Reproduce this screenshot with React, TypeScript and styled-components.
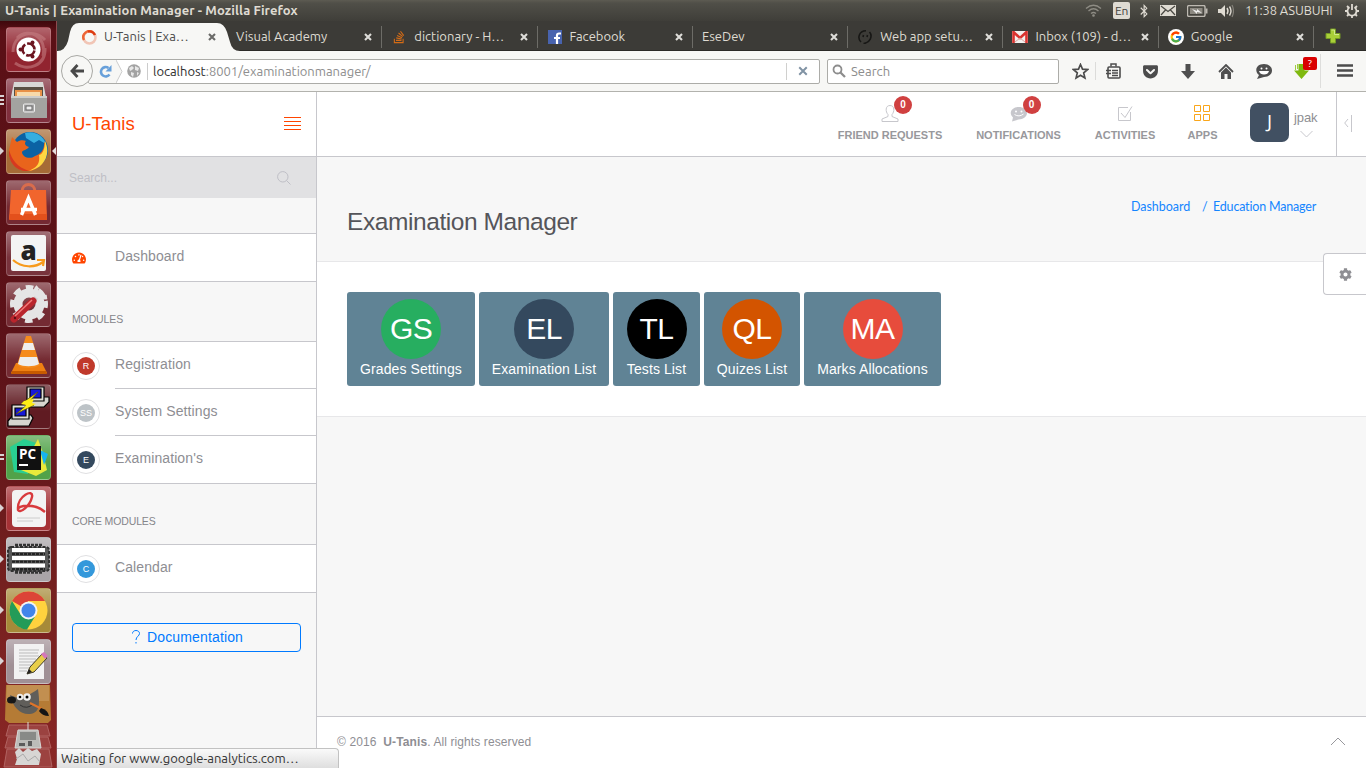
import React from "react";
import styled, { createGlobalStyle } from "styled-components";
import { FaBluetoothB, FaCog, FaGetPocket, FaStackOverflow, FaTachometerAlt } from "react-icons/fa";
import { FcGoogle } from "react-icons/fc";

const GlobalStyle = createGlobalStyle`
  * { box-sizing: border-box; }
  html, body { margin: 0; padding: 0; }
  body { width: 1366px; height: 768px; overflow: hidden; font-family: "Liberation Sans", Arial, sans-serif; }
  svg { display: block; flex: none; }
`;

const SYSTEM_FONT = `Ubuntu, "Open Sans", "Noto Sans", sans-serif`;

/* ---------- desktop ---------- */

const Desktop = styled.div`
  width: 1366px;
  height: 768px;
  display: grid;
  grid-template-rows: 21px 747px;
  overflow: hidden;
  background: #3c3b37;
`;

const MenuBar = styled.header`
  display: flex;
  align-items: center;
  padding: 0 7px 0 5px;
  background: linear-gradient(#5d5b52, #504f48 15%, #3f3e39);
  color: #dfdbd2;
  font: 12.9px/21px ${SYSTEM_FONT};
`;

const WindowTitle = styled.span`
  flex: 1;
  font-weight: 700;
  font-size: 13px;
  letter-spacing: 0.09px;
`;

const Indicators = styled.div`
  display: flex;
  align-items: center;
`;

const Indicator = styled.span<{ $w: number }>`
  width: ${(p) => p.$w}px;
  display: flex;
  justify-content: center;
`;

const LanguageBadge = styled.span`
  width: 17px;
  height: 17px;
  border-radius: 2px;
  background: #dfdbd2;
  color: #45443f;
  font-size: 12px;
  line-height: 17px;
  text-align: center;
  letter-spacing: -0.4px;
`;

const Clock = styled.span`
  width: 100px;
  letter-spacing: -0.08px;
  white-space: nowrap;
`;

const Workspace = styled.div`
  display: grid;
  grid-template-columns: 57px 1309px;
  min-height: 0;
`;

/* ---------- launcher ---------- */

const Launcher = styled.nav`
  display: flex;
  flex-direction: column;
  gap: 5px;
  padding-top: 5px;
  border-right: 1px solid #8d4a4e;
  background: linear-gradient(#3e080c, #5b1016 10px, #5c1218 45%, #74201f 75%, #8a2725);
  overflow: hidden;
`;

const LauncherRow = styled.div`
  display: flex;
  align-items: center;
  height: 46px;
  flex: none;
`;

const Marks = styled.div`
  width: 6px;
  height: 46px;
  display: flex;
  align-items: center;
  flex: none;
`;

const Tile = styled.div<{ $bg: string }>`
  width: 45px;
  height: 45px;
  border-radius: 4px;
  border: 1px solid rgba(255, 255, 255, 0.18);
  background: linear-gradient(rgba(255, 255, 255, 0.32), rgba(255, 255, 255, 0.03) 60%), ${(p) => p.$bg};
  display: grid;
  place-items: center;
`;

const FoldedStack = styled.div`
  margin-top: -5px;
  padding-left: 3px;
`;

/* ---------- browser ---------- */

const Browser = styled.div`
  display: grid;
  grid-template-rows: 30px 41px 676px;
  min-width: 0;
  position: relative;
`;

const TabStrip = styled.div`
  display: flex;
  padding-left: 15px;
  background: #3c3b37;
  border-bottom: 1px solid #2b2a27;
  font: 13px/30px ${SYSTEM_FONT};
`;

const TabItem = styled.div<{ $active?: boolean; $plain?: boolean; $divided?: boolean }>`
  position: relative;
  width: ${(p) => (p.$divided ? 155.3 : 155)}px;
  height: 30px;
  display: flex;
  align-items: center;
  gap: 7px;
  padding: 0 ${(p) => (p.$active ? 11 : 10)}px 0 9px;
  color: ${(p) => (p.$active ? "#4c4c4c" : "#dfdbd2")};
  background: ${(p) => (p.$divided ? "linear-gradient(#6d6c67, #6d6c67) right 0 top 5px / 1px 22px no-repeat" : "none")};
`;

const TabShape = styled.svg`
  position: absolute;
  left: -15px;
  top: 2px;
`;

const TabLabel = styled.span`
  position: relative;
  flex: 1;
  white-space: nowrap;
`;

const TabIcon = styled.span`
  position: relative;
  width: 16px;
  margin-top: 2px;
  display: flex;
  justify-content: center;
`;

const TabClose = styled.span`
  position: relative;
  margin-top: 2px;
`;

const NewTab = styled.div`
  display: flex;
  align-items: center;
  padding: 1px 0 0 11px;
`;

const Toolbar = styled.div`
  display: flex;
  align-items: center;
  padding-left: 4px;
  background: #f7f7f5;
  border-bottom: 1px solid #b2b2ad;
  font: 13px/23px ${SYSTEM_FONT};
`;

const BackButton = styled.div`
  width: 32px;
  height: 32px;
  border-radius: 50%;
  border: 1px solid #a9a9a5;
  background: #f7f7f5;
  display: grid;
  place-items: center;
  z-index: 1;
`;

const UrlBar = styled.div`
  width: 732px;
  height: 25px;
  margin-left: -5px;
  display: flex;
  align-items: center;
  border: 1px solid #acaca8;
  border-radius: 2px;
  background: #fff;
`;

const IdentityBox = styled.div`
  width: 58px;
  height: 23px;
  display: flex;
  align-items: center;
  padding-left: 10px;
  gap: 4px;
  background: linear-gradient(90deg, #f7f7f5 27px, #fff 27px);
`;

const UrlText = styled.span`
  flex: 1;
  color: #8e8e8e;
  letter-spacing: -0.02px;
  b { font-weight: 400; color: #2e2e2e; }
`;

const StopBox = styled.div`
  width: 33px;
  height: 17px;
  border-left: 1px solid #d0d0ce;
  display: grid;
  place-items: center;
`;

const SearchBar = styled.div`
  width: 232px;
  height: 25px;
  margin: 0 9px 0 7px;
  padding-left: 4px;
  display: flex;
  align-items: center;
  gap: 5px;
  border: 1px solid #acaca8;
  border-radius: 2px;
  background: #fff;
  color: #8c8c8c;
`;

const ToolButton = styled.div<{ $w?: number; $line?: boolean }>`
  position: relative;
  width: ${(p) => p.$w ?? 38}px;
  height: ${(p) => (p.$line ? 34 : 18)}px;
  display: grid;
  place-items: center;
  border-right: ${(p) => (p.$line ? "1px solid #dededc" : "none")};
`;

const StarButton = styled(ToolButton)`
  padding-right: 3px;
  border-right: 1px solid #dcdcda;
`;

const AlertBadge = styled.span`
  position: absolute;
  right: 3px;
  top: 3px;
  width: 14px;
  height: 13px;
  border-radius: 2px;
  background: #d90000;
  color: #fff;
  font-size: 10px;
  line-height: 13px;
  text-align: center;
`;

const StatusBubble = styled.div`
  position: absolute;
  left: 0;
  bottom: 0;
  width: 282px;
  height: 20px;
  padding-left: 4px;
  border: 1px solid #c2c2c2;
  border-left: 0;
  border-bottom: 0;
  border-top-right-radius: 4px;
  background: linear-gradient(#fafafa, #dedede);
  color: #333;
  font: 13px/18px ${SYSTEM_FONT};
  white-space: nowrap;
`;

/* ---------- web application ---------- */

const WebApp = styled.div`
  display: grid;
  grid-template-columns: 260px 1049px;
  min-height: 0;
  background: #f7f7f7;
  color: #8e8e93;
`;

const Sidebar = styled.aside`
  border-right: 1px solid #c7c7cc;
`;

const Brand = styled.div`
  height: 65px;
  display: flex;
  align-items: center;
  justify-content: space-between;
  padding: 0 15px;
  background: #fff;
  border-bottom: 1px solid #c7c7cc;
  color: #ff4500;
  font-size: 18.5px;
`;

const SideSearch = styled.div`
  height: 41px;
  display: flex;
  align-items: center;
  justify-content: space-between;
  padding: 0 25px 0 12px;
  background: #e1e1e3;
  color: #bfbfc6;
  font-size: 12px;
`;

const SectionTitle = styled.div<{ $h: number }>`
  height: ${(p) => p.$h}px;
  display: flex;
  align-items: flex-end;
  padding: 0 15px ${(p) => p.$h - 43}px;
  font-size: 10.5px;
  line-height: 12px;
  letter-spacing: -0.13px;
  color: #85858a;
`;

const SidebarGap = styled.div`
  height: 35px;
`;

const NavGroup = styled.div`
  background: #fff;
  border: solid #c7c7cc;
  border-width: 1px 0;
`;

const NavItem = styled.div`
  display: flex;
  align-items: center;
  height: 47px;
`;

const NavIcon = styled.span`
  width: 58px;
  padding-left: 15px;
`;

const NavLabel = styled.span<{ $divided?: boolean }>`
  flex: 1;
  height: 47px;
  line-height: 45px;
  font-size: 14px;
  letter-spacing: 0.1px;
  border-bottom: ${(p) => (p.$divided ? "1px solid #c7c7cc" : "0")};
`;

const Ring = styled.span`
  width: 28px;
  height: 28px;
  border: 1px solid #e0e0e2;
  border-radius: 50%;
  background: #fff;
  display: grid;
  place-items: center;
`;

const Monogram = styled.span<{ $color: string; $size: number; $font: number }>`
  width: ${(p) => p.$size}px;
  height: ${(p) => p.$size}px;
  border-radius: 50%;
  background: ${(p) => p.$color};
  color: #fff;
  font-size: ${(p) => p.$font}px;
  line-height: ${(p) => p.$size}px;
  text-align: center;
`;

const DocsButton = styled.div`
  height: 29px;
  margin: 30px 15px 0;
  padding: 0 0 2px 2px;
  display: flex;
  align-items: center;
  justify-content: center;
  gap: 7px;
  border: 1px solid #007aff;
  border-radius: 4px;
  color: #007aff;
  font-size: 14px;
  letter-spacing: 0.15px;
`;

const Main = styled.main`
  display: grid;
  grid-template-rows: 65px 105px 155px 299px 52px;
  position: relative;
`;

const TopBar = styled.div`
  display: flex;
  justify-content: flex-end;
  background: #fff;
  border-bottom: 1px solid #c7c7cc;
`;

const TopLink = styled.div<{ $w: number }>`
  position: relative;
  width: ${(p) => p.$w}px;
  margin-right: 33px;
  padding-top: 12px;
  display: flex;
  flex-direction: column;
  align-items: center;
  gap: 6px;
  font-size: 11px;
  font-weight: 700;
  line-height: 13px;
  color: #98989c;
  white-space: nowrap;
`;

const CountBadge = styled.span`
  position: absolute;
  left: calc(50% + 4px);
  top: 4px;
  width: 18px;
  height: 18px;
  border-radius: 9px;
  background: #d04040;
  color: #fff;
  font-size: 10px;
  line-height: 17px;
  text-align: center;
`;

const Avatar = styled.div`
  width: 39px;
  height: 39px;
  margin-top: 11px;
  border-radius: 7px;
  background: #415062;
  color: #fff;
  font: 19px/37px "Open Sans", sans-serif;
  text-align: center;
`;

const UserName = styled.div`
  width: 47px;
  padding: 17px 0 0 5px;
  font-size: 13px;
  line-height: 17px;
  letter-spacing: -0.1px;
  svg { margin: 4px 0 0 6px; }
`;

const Collapse = styled.div`
  width: 30px;
  padding: 22px 0 0 7px;
  border-left: 1px solid #c7c7cc;
`;

const PageHeading = styled.div`
  display: flex;
  justify-content: space-between;
  padding: 0 50px 0 30px;
  border-bottom: 1px solid #e7e7e9;
`;

const Heading = styled.h1`
  margin: 50px 0 0;
  font-size: 24.5px;
  line-height: 30px;
  font-weight: 400;
  letter-spacing: -0.42px;
  color: #55555a;
`;

const Breadcrumb = styled.div`
  display: flex;
  padding-top: 40px;
  color: #1485ff;
  font: 12.5px/19px Lato, sans-serif;
  white-space: nowrap;
`;

const Crumb = styled.span<{ $w: number; $spacing?: number }>`
  width: ${(p) => p.$w}px;
  letter-spacing: ${(p) => p.$spacing ?? 0}px;
`;

const CardPanel = styled.section`
  display: flex;
  gap: 4px;
  padding: 30px;
  background: #fff;
  border-bottom: 1px solid #e7e7e9;
`;

const Card = styled.div<{ $w: number }>`
  width: ${(p) => p.$w}px;
  height: 94px;
  padding-top: 7px;
  display: flex;
  flex-direction: column;
  align-items: center;
  border-radius: 3px;
  background: #608395;
  color: #fff;
  font-size: 14px;
  line-height: 21px;
  letter-spacing: 0.1px;
  white-space: nowrap;
`;

const CardMonogram = styled(Monogram)`
  letter-spacing: -0.6px;
`;

const SettingsTab = styled.div`
  position: absolute;
  right: 0;
  top: 161px;
  width: 43px;
  height: 42px;
  display: grid;
  place-items: center;
  border: 1px solid #c7c7cc;
  border-right: 0;
  border-radius: 4px 0 0 4px;
  background: #fff;
`;

const Footer = styled.footer`
  grid-row: 5;
  display: flex;
  align-items: center;
  justify-content: space-between;
  padding: 0 20px 2px;
  background: #fff;
  border-top: 1px solid #c7c7cc;
  font-size: 12px;
  letter-spacing: 0.1px;
`;

/* ---------- launcher drawings ---------- */

const Icon46 = ({ children }: { children: React.ReactNode }) => (
  <svg width="44" height="44" viewBox="0 0 44 44">{children}</svg>
);

const launcherItems: { bg: string; mark?: "dot" | "three" | "two" | "active"; art: React.ReactNode }[] = [
  {
    bg: "#8d1d28",
    art: (
      <Icon46>
        <path d="M6 24C6 5 28 0 38 12M38 20C39 38 20 44 8 35M10 10C22-1 40 8 36 28" fill="none" stroke="#c98386" strokeWidth="3" opacity=".55" />
        <circle cx="21.500" cy="21.500" r="12" fill="#fff" />
        <circle cx="21.500" cy="21.500" r="6" fill="none" stroke="#6c1520" strokeWidth="2.600" strokeDasharray="10.560 2" strokeDashoffset="-1" />
        <g fill="#6c1520"><circle cx="13.500" cy="21.500" r="2" /><circle cx="25.500" cy="14.500" r="2" /><circle cx="25.500" cy="28.500" r="2" /></g>
      </Icon46>
    ),
  },
  {
    bg: "#7c2837",
    mark: "three",
    art: (
      <Icon46>
        <path d="M7 3h29l3 15v20H4V18z" fill="#d7d7d5" />
        <path d="M7 8h29v10H7z" fill="#584f43" />
        <path d="M8 11h27v7H8z" fill="#e99147" /><path d="M10 13h23v4H10z" fill="#f8d9a9" />
        <path d="M4 17h36v22H4z" fill="#a3a3a0" /><path d="M4 17h36v2H4z" fill="#cecdca" />
        <rect x="16.500" y="25" width="11" height="8" rx="1" fill="#aaa" stroke="#eee" />
        <rect x="19" y="27" width="6" height="4" fill="#eee" stroke="#666" />
      </Icon46>
    ),
  },
  {
    bg: "#a3662f",
    mark: "active",
    art: (
      <Icon46>
        <circle cx="23" cy="20" r="18" fill="#0b62a4" />
        <path d="M18 3c9-3 19 3 21 11l-7-4-5 3-8-5z" fill="#35aee0" />
        <path d="M37 11c6 14-2 29-15 30C10 42 1 32 2 20L5 7l5 5c3-2 6-2 9-1-2 2-1 5 3 6-2 3-6 3-7 5 0 5 8 8 13 4 5-2 10-5 9-15z" fill="#e9641c" />
        <path d="M38 11c7 15-3 28-16 30 9-4 11-8 10-16 4-1 6-7 6-14z" fill="#ffd742" />
        <path d="M2 20c3 10 8 17 20 21C9 42 1 32 2 20z" fill="#d63920" />
      </Icon46>
    ),
  },
  {
    bg: "#70222b",
    art: (
      <Icon46>
        <path d="M15 11c0-10 13-10 13 0" fill="none" stroke="#d96c4c" strokeWidth="3" />
        <path d="M4 9h35l1 29H2z" fill="#f1652d" /><path d="M3 33h37v6H2z" fill="#e3501c" />
        <path d="M14.500 34l7-17 7 17M14 28.500h16" fill="none" stroke="#fff" strokeWidth="3.400" />
      </Icon46>
    ),
  },
  {
    bg: "#742c36",
    art: (
      <Icon46>
        <rect x="4" y="3" width="35" height="36" rx="2" fill="#f4f4f4" />
        <text x="21.500" y="28" textAnchor="middle" fontFamily="Open Sans, sans-serif" fontWeight="800" fontSize="26" fill="#222">a</text>
        <path d="M6 28c9 8 22 8 30 2M30 28l7 0-1 6" fill="none" stroke="#f79a1c" strokeWidth="2.200" />
      </Icon46>
    ),
  },
  {
    bg: "#70242c",
    art: (
      <Icon46>
        <circle cx="22" cy="21" r="11" fill="none" stroke="#e5e5e5" strokeWidth="9" />
        <circle cx="22" cy="21" r="16.500" fill="none" stroke="#e5e5e5" strokeWidth="5" strokeDasharray="7.500 5.460" strokeDashoffset="3.700" />
        <path d="M26 18l7-7" stroke="#cfcfcf" strokeWidth="4.500" />
        <path d="M31 4c-5 4-3 12 9 10M33 13l-4-5" fill="none" stroke="#e4e4e4" strokeWidth="4.500" />
        <path d="M7 36L26 18" stroke="#b9252c" strokeWidth="7" strokeLinecap="round" /><path d="M8 33L25 17" stroke="#ef7b79" strokeWidth="1.500" />
        <circle cx="8" cy="35" r="1.200" fill="#5a1015" />
      </Icon46>
    ),
  },
  {
    bg: "#70242c",
    art: (
      <Icon46>
        <path d="M9 29h26l5 10H4z" fill="#ef8012" /><path d="M5 37h34l1 3H4z" fill="#c75a00" />
        <path d="M19 2h5l9 29c-5 4-18 4-23 0z" fill="#f58b1c" />
        <path d="M17 9h9l2 7H15zM13 23h17l2 7c-5 3-16 3-21 0z" fill="#eee" />
      </Icon46>
    ),
  },
  {
    bg: "#5b141b",
    art: (
      <Icon46>
        <g stroke="#000" strokeWidth="1.200">
          <path d="M18 17l4-5h20v5l-5 5H18z" fill="#d6d6cf" /><path d="M20 2h17v14H20z" fill="#deded6" /><path d="M23 4h11v9H23z" fill="#1518d8" />
          <path d="M1 36l5-6h18l2 3-4 8H1z" fill="#d6d6cf" /><path d="M5 20h17v14H5z" fill="#deded6" /><path d="M8 23h11v8H8z" fill="#1518d8" />
        </g>
        <path d="M31 7L15 18l6 1-12 10 18-9-6-2z" fill="#ffed18" stroke="#554c00" strokeWidth=".7" />
        <path d="M17 16l10-2-2 4 4 1-12 5 2-4-5-1z" fill="#ffed18" />
      </Icon46>
    ),
  },
  {
    bg: "#4b9f43",
    mark: "two",
    art: (
      <Icon46>
        <path d="M3 11L17 3l12 4-8 31-14-2z" fill="#29cf91" /><path d="M31 3l5 14 4 17-11 6-15-6z" fill="#e8ea3b" /><path d="M33 14l8 4-4 11z" fill="#16b4ee" />
        <path d="M10 10h24v24H10z" fill="#111" />
        <text x="12" y="22.500" fontFamily="Open Sans, sans-serif" fontWeight="700" fontSize="13.500" fill="#fff">PC</text><path d="M12 28h9v2h-9z" fill="#fff" />
      </Icon46>
    ),
  },
  {
    bg: "#a22b30",
    mark: "dot",
    art: (
      <Icon46>
        <rect x="5" y="3" width="34" height="37" rx="4" fill="#f3f3f3" />
        <path d="M11 22C10 9 27 1 25 10 23 19 13 27 11 23c-1-5 17-7 27 2" fill="none" stroke="#d83a3d" strokeWidth="2.400" />
        <path d="M10 31h23M10 34h16" stroke="#ccc" />
      </Icon46>
    ),
  },
  {
    bg: "#a6a1a4",
    mark: "dot",
    art: (
      <Icon46>
        <rect x="1" y="9" width="41" height="24" rx="3" fill="#5a5a5a" stroke="#303030" strokeWidth="2" strokeDasharray="3 1.500" />
        <path d="M8 7h27M8 34.500h27" stroke="#333" strokeWidth="2.500" strokeDasharray="3 1" />
        <path d="M5 12h33M5 20h33M5 27.500h33" stroke="#fff" strokeWidth="4" />
        <path d="M5 16h33M5 23.700h33M5 31h33" stroke="#222" strokeWidth="2" strokeDasharray="3 1" />
      </Icon46>
    ),
  },
  {
    bg: "#a38633",
    mark: "dot",
    art: (
      <Icon46>
        <circle cx="21.500" cy="21.500" r="19" fill="#ffd23e" />
        <path d="M21.500 21.500L5 12A19 19 0 0 1 38 12H21z" fill="#dc4437" />
        <path d="M5 12a19 19 0 0 0 15 28.500l8-13L14 26z" fill="#249b58" />
        <circle cx="21.500" cy="21.500" r="9" fill="#f4f4f4" /><circle cx="21.500" cy="21.500" r="7" fill="#4285ea" />
      </Icon46>
    ),
  },
  {
    bg: "#9d8c92",
    mark: "dot",
    art: (
      <Icon46>
        <path d="M7 4h30v35H7z" fill="#f2f2f2" />
        <path d="M12 10h20M12 13h19M12 16h20M12 19h17M12 22h18M12 25h12M12 28h10M12 31h8" stroke="#bbb" />
        <path d="M20 34l3-7 12-13 5 4-13 14z" fill="#e8ce48" stroke="#403c2a" /><path d="M20 34l2-5 3 3z" fill="#222" /><path d="M34 14l3-2 4 4-3 3z" fill="#d477ba" />
      </Icon46>
    ),
  },
];

const RunningMark = ({ kind }: { kind?: string }) => (
  <Marks>
    {kind && (
      <svg width="5" height="12" viewBox="0 0 5 12" fill="#d9d3d4">
        {kind === "three" || kind === "two" ? (
          <path d={kind === "three" ? "M0 1h4v2H0zM0 5h4v2H0zM0 9h4v2H0z" : "M0 3h4v2H0zM0 7h4v2H0z"} />
        ) : (
          <path d="M0 2l4 4-4 4z" />
        )}
      </svg>
    )}
  </Marks>
);

const ActiveMark = styled.span`
  width: 0;
  height: 0;
  border: solid transparent;
  border-width: 4px 4px 4px 0;
  border-right-color: #e5dede;
  margin-left: 1px;
`;

const FoldedIcons = () => (
  <svg width="50" height="84" viewBox="0 0 50 84">
    <path d="M3 1h44l1 35-3 3H6l-4-3z" fill="#b57b35" /><path d="M4 1h42v16H3z" fill="#d9b583" opacity=".35" />
    <path d="M7 11c9 5 17 2 28-6 2 15 2 24-8 25-9 1-17-6-20-19z" fill="#605e5a" />
    <ellipse cx="8.500" cy="16" rx="4.500" ry="3.500" fill="#171717" />
    <circle cx="17" cy="13" r="3.200" fill="#eee" /><circle cx="24" cy="13" r="3.800" fill="#eee" /><circle cx="17" cy="13" r="1.300" /><circle cx="24" cy="13" r="1.500" />
    <path d="M17 21q7 5 13-1" fill="none" stroke="#333" /><path d="M27 19l12 6" stroke="#e07428" strokeWidth="2" /><path d="M38 24q7 2 8 8-7 0-10-5z" fill="#151515" />
    <path d="M6 41h38l3 11H3zM5 53h40l3 11H2zM4 65h42l3 18H1z" fill="#a34c4a" stroke="#bf7775" opacity=".75" />
    <path d="M25 38v8M15 46h20l3 18H12z" fill="#bcbcb9" stroke="#d8d8d6" /><path d="M17 48h16v8H17z" fill="#888a87" />
    <path d="M16 59h6v3h-6zM25 57h4v5h-4z" fill="#5b5b5b" /><path d="M12 68l4-4 4 4 5-4 4 3 5-2 4 5-2 11H12l2-6z" fill="#d8d6d4" />
    <path d="M13 75l7-5 5 7 7-5 5 6" fill="none" stroke="#aaa" />
  </svg>
);

/* ---------- small shared drawings ---------- */

const Cross = ({ color, size = 8 }: { color: string; size?: number }) => (
  <svg width={size} height={size} viewBox="0 0 8 8"><path d="M1 1l6 6M7 1L1 7" stroke={color} strokeWidth={size > 8 ? 1.6 : 2.1} /></svg>
);

const Magnifier = () => (
  <svg width="14" height="14" viewBox="0 0 14 14" fill="none" stroke="#8d8d8d"><circle cx="5.500" cy="5.500" r="4" strokeWidth="1.800" /><path d="M8.500 8.500l4.500 4.500" strokeWidth="2.300" /></svg>
);

const tabs: { label: string; icon?: React.ReactNode }[] = [
  { label: "Visual Academy" },
  {
    label: "dictionary - H…",
    icon: <FaStackOverflow size={14} color="#d36b16" />,
  },
  {
    label: "Facebook",
    icon: <svg width="14" height="14" viewBox="0 0 14 14"><path d="M0 0h14v14H0z" fill="#4863ae" /><path d="M9 14V5.500Q9 3.500 11 3.500h2M6 8h6" fill="none" stroke="#fff" strokeWidth="2.200" /></svg>,
  },
  { label: "EseDev" },
  {
    label: "Web app setu…",
    icon: <svg width="14" height="14" viewBox="0 0 14 14" fill="none" stroke="#171715" strokeWidth="1.600"><path d="M8 .8C1 1-1 8 3 12M5.500 13.500C12 13 15 6 11.500 2M5.500 5l-.5 2M9.500 5L9 7" /></svg>,
  },
  {
    label: "Inbox (109) - d…",
    icon: <svg width="16" height="12" viewBox="0 0 16 12"><path d="M0 0h16v12H0z" fill="#f3f1ef" /><path d="M1.500 12V1L8 7l6.500-6v11" fill="none" stroke="#d93430" strokeWidth="2.600" /><path d="M3 11l5-4 5 4" stroke="#d9a29f" fill="none" /></svg>,
  },
  {
    label: "Google",
    icon: <svg width="16" height="16" viewBox="0 0 16 16"><circle cx="8" cy="8" r="8" fill="#fff" /><g transform="translate(1.500 1.500)"><FcGoogle size={13} /></g></svg>,
  },
];

const modules = [
  { letter: "R", label: "Registration", color: "#c0392b" },
  { letter: "SS", label: "System Settings", color: "#bdc3c7" },
  { letter: "E", label: "Examination's", color: "#34495e" },
];

const cards = [
  { code: "GS", label: "Grades Settings", color: "#27ae60", width: 128 },
  { code: "EL", label: "Examination List", color: "#34495e", width: 130 },
  { code: "TL", label: "Tests List", color: "#000", width: 87 },
  { code: "QL", label: "Quizes List", color: "#d35400", width: 96 },
  { code: "MA", label: "Marks Allocations", color: "#e74c3c", width: 137 },
];

const SystemMenu = () => (
  <MenuBar>
    <WindowTitle>U-Tanis | Examination Manager - Mozilla Firefox</WindowTitle>
    <Indicators>
      <Indicator $w={40}>
        <svg width="17" height="13" viewBox="0 0 17 13" fill="none" stroke="#8e8c84" strokeWidth="1.300"><path d="M1 4.500Q8.500-2 16 4.500M3.500 7Q8.500 2.500 13.500 7M6 9.500q2.500-2 5 0" /><circle cx="8.500" cy="11.500" r=".7" /></svg>
      </Indicator>
      <LanguageBadge>En</LanguageBadge>
      <Indicator $w={28}><FaBluetoothB size={14} /></Indicator>
      <Indicator $w={19}>
        <svg width="16" height="11" viewBox="0 0 16 11"><path d="M0 0h16v11H0z" fill="#dfdbd2" /><path d="M1 1l7 5.500L15 1M1 10l4.500-5M15 10l-4.500-5" fill="none" stroke="#4a4943" strokeWidth="1.200" /></svg>
      </Indicator>
      <Indicator $w={41}>
        <svg width="21" height="12" viewBox="0 0 21 12" fill="none" stroke="#bdb9b1"><rect x=".5" y=".5" width="17.500" height="11" rx="1.500" strokeWidth="1.400" /><path d="M3 3h12.500v6H3z" fill="#8c8981" stroke="none" /><path d="M19.500 3.500v5" strokeWidth="2" /><path d="M5 4l5 2v-2l5 4-5-1v2z" fill="#eee" stroke="none" /></svg>
      </Indicator>
      <Indicator $w={16}>
        <svg width="16" height="14" viewBox="0 0 16 14"><path d="M0 5h3l4-4v12L3 9H0z" fill="#dfdbd2" /><path d="M9 4q2 3 0 6M11.500 2.500q3 4.500 0 9" fill="none" stroke="#dfdbd2" strokeWidth="1.400" /><path d="M14 1q3 6 0 12" fill="none" stroke="#85827a" strokeWidth="1.200" /></svg>
      </Indicator>
      <Indicator $w={11} />
      <Clock>11:38 ASUBUHI</Clock>
      <svg width="14" height="14" viewBox="0 0 14 14" fill="none" stroke="#dfdbd2"><path d="M4.500 3.300a4.500 4.500 0 1 0 5 0" strokeWidth="1.800" /><path d="M7 0v6" strokeWidth="1.800" /><path d="M7 14v-3M0 7h3M11 7h3M2 2l2 2M12 2l-2 2M2 12l2-2M12 12l-2-2" strokeWidth="1.800" /></svg>
    </Indicators>
  </MenuBar>
);

const AppLauncher = () => (
  <Launcher>
    {launcherItems.map((item, i) => (
      <LauncherRow key={i}>
        <RunningMark kind={item.mark} />
        <Tile $bg={item.bg}>{item.art}</Tile>
        {item.mark === "active" && <ActiveMark />}
      </LauncherRow>
    ))}
    <FoldedStack><FoldedIcons /></FoldedStack>
  </Launcher>
);

const BrowserTabs = () => (
  <TabStrip>
    <TabItem $active>
      <TabShape width="183" height="28" viewBox="0 0 183 28"><path d="M0 28Q8 28 11 18L13 9Q15 0 22 0H160Q167 0 170 9l3 10Q175 28 183 28z" fill="#f7f7f5" /></TabShape>
      <TabIcon>
        <svg width="15" height="15" viewBox="0 0 15 15" fill="none"><circle cx="7.500" cy="7.500" r="6" stroke="#f1c5b5" strokeWidth="2.500" /><path d="M11 2.500A6 6 0 0 0 2 10" stroke="#ed6536" strokeWidth="2.500" /><path d="M6 1.600a6 6 0 0 1 7 3.500" stroke="#dd3c12" strokeWidth="2.500" /></svg>
      </TabIcon>
      <TabLabel>U-Tanis | Exa…</TabLabel>
      <TabClose><Cross color="#6a6a68" /></TabClose>
    </TabItem>
    {tabs.map((tab) => (
      <TabItem key={tab.label} $plain={!tab.icon} $divided>
        {tab.icon && <TabIcon>{tab.icon}</TabIcon>}
        <TabLabel>{tab.label}</TabLabel>
        <TabClose><Cross color="#deddd9" /></TabClose>
      </TabItem>
    ))}
    <NewTab>
      <svg width="16" height="16" viewBox="0 0 16 16"><path d="M5.500 1h5v4.500H15v5h-4.500V15h-5v-4.500H1v-5h4.500z" fill="#a9cf38" stroke="#749a24" /><path d="M6.500 2h3v4.500H14" fill="none" stroke="#d2e98c" /></svg>
    </NewTab>
  </TabStrip>
);

const BrowserToolbar = () => (
  <Toolbar>
    <BackButton>
      <svg width="14" height="14" viewBox="0 0 14 14" fill="none" stroke="#484848" strokeWidth="2.800"><path d="M7.500 1L2 7l5.500 6M2 7h12" /></svg>
    </BackButton>
    <UrlBar>
      <IdentityBox>
        <svg width="13" height="13" viewBox="0 0 13 13"><path d="M10.500 9.500A4.700 4.700 0 1 1 9.500 3" fill="none" stroke="#68a0da" strokeWidth="2.600" /><path d="M12.500 0v6.500H6.500z" fill="#68a0da" /></svg>
        <svg width="7" height="23" viewBox="0 0 7 23"><path d="M0 0l6 11.500L0 23" fill="#f7f7f5" stroke="#ccc" /></svg>
        <svg width="14" height="14" viewBox="0 0 14 14"><circle cx="7" cy="7" r="6.800" fill="#a3a3a3" /><path d="M2 4l3-2 2 2-2 2-2 1zM8 2l4 2-1 3-3-1zM4 8l3 1-1 4-2-2zM10 8l2 1-2 3z" fill="#e8e8e8" /></svg>
      </IdentityBox>
      <svg width="6" height="17" viewBox="0 0 6 17"><path d="M.5 0v17" stroke="#ccc" /></svg>
      <UrlText><b>localhost</b>:8001/examinationmanager/</UrlText>
      <StopBox><Cross color="#8093a4" size={10} /></StopBox>
    </UrlBar>
    <SearchBar><Magnifier />Search</SearchBar>
    <StarButton $w={28}>
      <svg width="17" height="17" viewBox="0 0 17 17"><path d="M8.500 1.500l2 4.700 5 .4-3.800 3.300 1.200 5-4.400-2.700-4.400 2.700 1.200-5L1.500 6.600l5-.4z" fill="none" stroke="#4c4c4c" strokeWidth="1.700" /></svg>
    </StarButton>
    <ToolButton $w={35}>
      <svg width="15" height="16" viewBox="0 0 15 16" fill="none" stroke="#4c4c4c"><path d="M5 3.500V1h5v2.500" strokeWidth="1.500" /><rect x="2" y="4" width="12" height="11" rx="1" strokeWidth="1.600" /><path d="M0 7.500h5M0 10.500h5M6 7.500h6M6 10h6M6 12.500h6" strokeWidth="1.300" /></svg>
    </ToolButton>
    <ToolButton><FaGetPocket size={17} color="#4c4c4c" /></ToolButton>
    <ToolButton>
      <svg width="14" height="15" viewBox="0 0 14 15"><path d="M4.500 0h5v7H14l-7 8-7-8h4.500z" fill="#4f4f4f" /></svg>
    </ToolButton>
    <ToolButton>
      <svg width="16" height="15" viewBox="0 0 16 15"><path d="M1 8l7-7 7 7" fill="none" stroke="#4f4f4f" strokeWidth="1.800" /><path d="M3 8.500l5-5 5 5V15H9.500v-5h-3v5H3z" fill="#4f4f4f" /></svg>
    </ToolButton>
    <ToolButton>
      <svg width="16" height="15" viewBox="0 0 16 15"><path d="M8 0c5 0 8 3 8 6.500S13 13 8 13l-7 2 2-4C-2 7 0 0 8 0z" fill="#4f4f4f" /><circle cx="5.500" cy="4.500" r="1" fill="#fff" /><circle cx="10.500" cy="4.500" r="1" fill="#fff" /><path d="M3 7h10Q12 10.500 8 10.500T3 7z" fill="#fff" /></svg>
    </ToolButton>
    <ToolButton $line>
      <svg width="15" height="16" viewBox="0 0 15 16"><path d="M4.500 1h6v6.500H15L7.500 16 0 7.500h4.500z" fill="#7fb90f" /><path d="M1.500 2v5M3.500 1v5" stroke="#a1cd42" /></svg>
      <AlertBadge>?</AlertBadge>
    </ToolButton>
    <ToolButton $w={48}>
      <svg width="16" height="14" viewBox="0 0 16 14"><path d="M0 1.500h16M0 6.500h16M0 11.500h16" stroke="#4c4c4c" strokeWidth="2.700" /></svg>
    </ToolButton>
  </Toolbar>
);

const NavMonogram = ({ letter, color }: { letter: string; color: string }) => (
  <NavIcon><Ring><Monogram $color={color} $size={18} $font={9}>{letter}</Monogram></Ring></NavIcon>
);

const SideNavigation = () => (
  <Sidebar>
    <Brand>
      U-Tanis
      <svg width="17" height="14" viewBox="0 0 17 14"><path d="M0 .5h17M0 4.500h17M0 8.500h17M0 12.500h17" stroke="#ff4500" /></svg>
    </Brand>
    <SideSearch>
      Search...
      <svg width="14" height="14" viewBox="0 0 14 14" fill="none" stroke="#bfbfc6"><circle cx="5.800" cy="5.800" r="5.200" /><path d="M9.500 9.500l4 4" /></svg>
    </SideSearch>
    <SidebarGap />
    <NavGroup>
      <NavItem>
        <NavIcon><FaTachometerAlt size={14} color="#ff4500" /></NavIcon>
        <NavLabel>Dashboard</NavLabel>
      </NavItem>
    </NavGroup>
    <SectionTitle $h={59}>MODULES</SectionTitle>
    <NavGroup>
      {modules.map((m, i) => (
        <NavItem key={m.label}>
          <NavMonogram letter={m.letter} color={m.color} />
          <NavLabel $divided={i < modules.length - 1}>{m.label}</NavLabel>
        </NavItem>
      ))}
    </NavGroup>
    <SectionTitle $h={60}>CORE MODULES</SectionTitle>
    <NavGroup>
      <NavItem>
        <NavMonogram letter="C" color="#3498db" />
        <NavLabel>Calendar</NavLabel>
      </NavItem>
    </NavGroup>
    <DocsButton>
      <svg width="8" height="14" viewBox="0 0 8 14" fill="none" stroke="#007aff"><path d="M.5 3.500C.5-.5 7.500-.5 7.500 3.500 7.500 6 4 6.500 4 10M4 12v1.500" /></svg>
      Documentation
    </DocsButton>
  </Sidebar>
);

const Content = () => (
  <Main>
    <TopBar>
      <TopLink $w={104}>
        <svg width="18" height="19" viewBox="0 0 18 19" fill="none" stroke="#c7c7cc"><path d="M7 10.500C4.500 8 4 1.500 9 1.500s4.500 6.500 2 9v2l6 2.500v2.500H1V15l6-2.500z" /></svg>
        FRIEND REQUESTS
        <CountBadge>0</CountBadge>
      </TopLink>
      <TopLink $w={87}>
        <svg width="18" height="19" viewBox="0 0 18 19"><path d="M8.500 3c5 0 8.500 2.500 8.500 6s-3.500 6.500-8.500 6.500L2 17.500l1-4C-2 9 2 3 8.500 3z" fill="#c7c7cc" /><circle cx="6" cy="7.500" r="1" fill="#fff" /><circle cx="11.500" cy="7.500" r="1" fill="#fff" /><path d="M4.500 10.500q4.500 3 9-.5" fill="none" stroke="#fff" /></svg>
        NOTIFICATIONS
        <CountBadge>0</CountBadge>
      </TopLink>
      <TopLink $w={60}>
        <svg width="16" height="19" viewBox="0 0 16 19" fill="none" stroke="#c7c7cc"><path d="M11 3.500H1.500v13h12V8M4 9l4 4.500 7-11" /></svg>
        ACTIVITIES
      </TopLink>
      <TopLink $w={29}>
        <svg width="17" height="19" viewBox="0 0 17 19" fill="none" stroke="#faa61a"><path d="M.5 1.500h6v6h-6zM9.500 1.500h6v6h-6zM.5 10.500h6v6h-6zM9.500 10.500h6v6h-6z" /></svg>
        APPS
      </TopLink>
      <Avatar>J</Avatar>
      <UserName>
        jpak
        <svg width="13" height="8" viewBox="0 0 13 8"><path d="M.5 1l6 6 6-6" fill="none" stroke="#c7c7cc" /></svg>
      </UserName>
      <Collapse>
        <svg width="9" height="18" viewBox="0 0 9 18"><path d="M4 5L.7 9 4 13M7.500 1v17" fill="none" stroke="#c7c7cc" /></svg>
      </Collapse>
    </TopBar>
    <PageHeading>
      <Heading>Examination Manager</Heading>
      <Breadcrumb>
        <Crumb $w={71} $spacing={-0.05}>Dashboard</Crumb>
        <Crumb $w={11}>/</Crumb>
        <Crumb $w={103} $spacing={-0.18}>Education Manager</Crumb>
      </Breadcrumb>
    </PageHeading>
    <CardPanel>
      {cards.map((card) => (
        <Card key={card.code} $w={card.width}>
          <CardMonogram $color={card.color} $size={60} $font={30}>{card.code}</CardMonogram>
          {card.label}
        </Card>
      ))}
    </CardPanel>
    <SettingsTab><FaCog size={13} color="#8e8e93" /></SettingsTab>
    <Footer>
      <span>© 2016 &nbsp;<b>U-Tanis</b>. All rights reserved</span>
      <svg width="16" height="9" viewBox="0 0 16 9"><path d="M1 8l7-7 7 7" fill="none" stroke="#98989c" /></svg>
    </Footer>
  </Main>
);

export default function App() {
  return (
    <>
      <GlobalStyle />
      <Desktop>
        <SystemMenu />
        <Workspace>
          <AppLauncher />
          <Browser>
            <BrowserTabs />
            <BrowserToolbar />
            <WebApp>
              <SideNavigation />
              <Content />
            </WebApp>
            <StatusBubble>Waiting for www.google-analytics.com…</StatusBubble>
          </Browser>
        </Workspace>
      </Desktop>
    </>
  );
}
